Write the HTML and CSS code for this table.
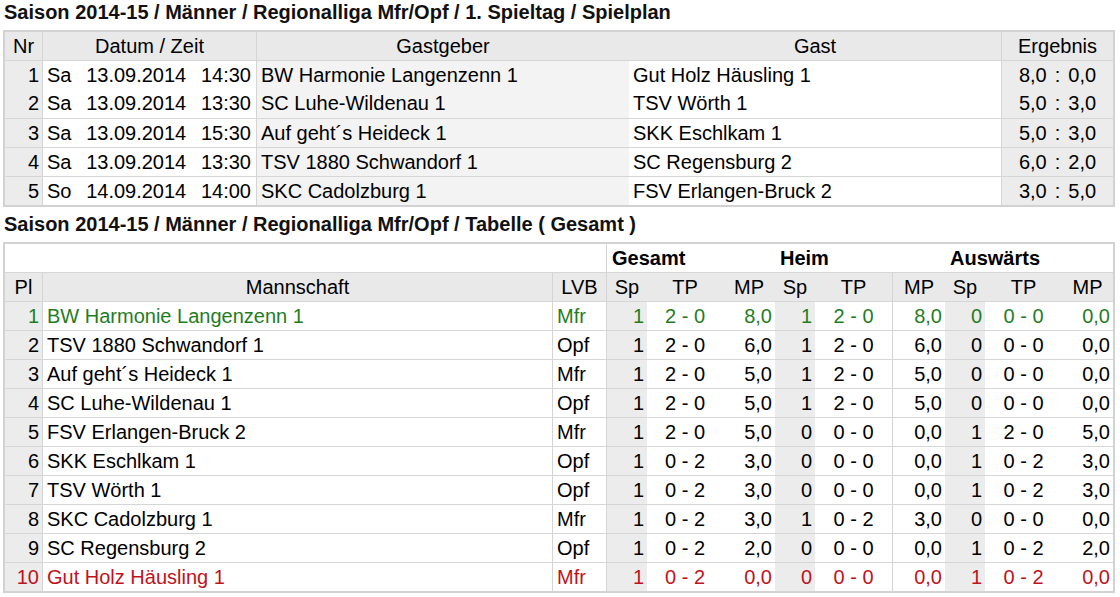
FILE: index.html
```html
<!DOCTYPE html>
<html lang="de">
<head>
<meta charset="utf-8">
<title>Regionalliga Mfr/Opf</title>
<link rel="stylesheet" href="styles.css">
</head>
<body>
<div class="page">
  <h1 class="title">Saison 2014-15 / Männer / Regionalliga Mfr/Opf / 1. Spieltag / Spielplan</h1>
  <div class="tbl plan">
    <div class="row head">
      <div class="c center vr">Nr</div>
      <div class="c center vr">Datum / Zeit</div>
      <div class="c center">Gastgeber</div>
      <div class="c center vr">Gast</div>
      <div class="c center">Ergebnis</div>
    </div>
    <div class="row">
      <div class="c right vr grey">1</div>
      <div class="c dt vr"><span>Sa</span><span>13.09.2014</span><span>14:30</span></div>
      <div class="c light">BW Harmonie Langenzenn 1</div>
      <div class="c vr">Gut Holz Häusling 1</div>
      <div class="c center grey">8,0<span class="sep">:</span>0,0</div>
    </div>
    <div class="row nosep">
      <div class="c right vr grey">2</div>
      <div class="c dt vr"><span>Sa</span><span>13.09.2014</span><span>13:30</span></div>
      <div class="c light">SC Luhe-Wildenau 1</div>
      <div class="c vr">TSV Wörth 1</div>
      <div class="c center grey">5,0<span class="sep">:</span>3,0</div>
    </div>
    <div class="row">
      <div class="c right vr grey">3</div>
      <div class="c dt vr"><span>Sa</span><span>13.09.2014</span><span>15:30</span></div>
      <div class="c light">Auf geht´s Heideck 1</div>
      <div class="c vr">SKK Eschlkam 1</div>
      <div class="c center grey">5,0<span class="sep">:</span>3,0</div>
    </div>
    <div class="row">
      <div class="c right vr grey">4</div>
      <div class="c dt vr"><span>Sa</span><span>13.09.2014</span><span>13:30</span></div>
      <div class="c light">TSV 1880 Schwandorf 1</div>
      <div class="c vr">SC Regensburg 2</div>
      <div class="c center grey">6,0<span class="sep">:</span>2,0</div>
    </div>
    <div class="row">
      <div class="c right vr grey">5</div>
      <div class="c dt vr"><span>So</span><span>14.09.2014</span><span>14:00</span></div>
      <div class="c light">SKC Cadolzburg 1</div>
      <div class="c vr">FSV Erlangen-Bruck 2</div>
      <div class="c center grey">3,0<span class="sep">:</span>5,0</div>
    </div>
  </div>

  <h1 class="title second">Saison 2014-15 / Männer / Regionalliga Mfr/Opf / Tabelle ( Gesamt )</h1>
  <div class="tbl standings">
    <div class="row group">
      <div class="c span3 vr"></div>
      <div class="c span3 bold">Gesamt</div>
      <div class="c span3 bold">Heim</div>
      <div class="c span3 bold">Auswärts</div>
    </div>
    <div class="row head">
      <div class="c center vr">Pl</div>
      <div class="c center vr">Mannschaft</div>
      <div class="c center vr">LVB</div>
      <div class="c center">Sp</div>
      <div class="c center">TP</div>
      <div class="c center">MP</div>
      <div class="c center">Sp</div>
      <div class="c center vr">TP</div>
      <div class="c center">MP</div>
      <div class="c center">Sp</div>
      <div class="c center">TP</div>
      <div class="c center">MP</div>
    </div>
    <div class="row up">
      <div class="c right vr grey">1</div><div class="c vr">BW Harmonie Langenzenn 1</div><div class="c vr">Mfr</div>
      <div class="c right grey">1</div><div class="c center">2 - 0</div><div class="c right">8,0</div>
      <div class="c right grey">1</div><div class="c center vr">2 - 0</div><div class="c right">8,0</div>
      <div class="c right grey">0</div><div class="c center">0 - 0</div><div class="c right">0,0</div>
    </div>
    <div class="row">
      <div class="c right vr grey">2</div><div class="c vr">TSV 1880 Schwandorf 1</div><div class="c vr">Opf</div>
      <div class="c right grey">1</div><div class="c center">2 - 0</div><div class="c right">6,0</div>
      <div class="c right grey">1</div><div class="c center vr">2 - 0</div><div class="c right">6,0</div>
      <div class="c right grey">0</div><div class="c center">0 - 0</div><div class="c right">0,0</div>
    </div>
    <div class="row">
      <div class="c right vr grey">3</div><div class="c vr">Auf geht´s Heideck 1</div><div class="c vr">Mfr</div>
      <div class="c right grey">1</div><div class="c center">2 - 0</div><div class="c right">5,0</div>
      <div class="c right grey">1</div><div class="c center vr">2 - 0</div><div class="c right">5,0</div>
      <div class="c right grey">0</div><div class="c center">0 - 0</div><div class="c right">0,0</div>
    </div>
    <div class="row">
      <div class="c right vr grey">4</div><div class="c vr">SC Luhe-Wildenau 1</div><div class="c vr">Opf</div>
      <div class="c right grey">1</div><div class="c center">2 - 0</div><div class="c right">5,0</div>
      <div class="c right grey">1</div><div class="c center vr">2 - 0</div><div class="c right">5,0</div>
      <div class="c right grey">0</div><div class="c center">0 - 0</div><div class="c right">0,0</div>
    </div>
    <div class="row">
      <div class="c right vr grey">5</div><div class="c vr">FSV Erlangen-Bruck 2</div><div class="c vr">Mfr</div>
      <div class="c right grey">1</div><div class="c center">2 - 0</div><div class="c right">5,0</div>
      <div class="c right grey">0</div><div class="c center vr">0 - 0</div><div class="c right">0,0</div>
      <div class="c right grey">1</div><div class="c center">2 - 0</div><div class="c right">5,0</div>
    </div>
    <div class="row">
      <div class="c right vr grey">6</div><div class="c vr">SKK Eschlkam 1</div><div class="c vr">Opf</div>
      <div class="c right grey">1</div><div class="c center">0 - 2</div><div class="c right">3,0</div>
      <div class="c right grey">0</div><div class="c center vr">0 - 0</div><div class="c right">0,0</div>
      <div class="c right grey">1</div><div class="c center">0 - 2</div><div class="c right">3,0</div>
    </div>
    <div class="row">
      <div class="c right vr grey">7</div><div class="c vr">TSV Wörth 1</div><div class="c vr">Opf</div>
      <div class="c right grey">1</div><div class="c center">0 - 2</div><div class="c right">3,0</div>
      <div class="c right grey">0</div><div class="c center vr">0 - 0</div><div class="c right">0,0</div>
      <div class="c right grey">1</div><div class="c center">0 - 2</div><div class="c right">3,0</div>
    </div>
    <div class="row">
      <div class="c right vr grey">8</div><div class="c vr">SKC Cadolzburg 1</div><div class="c vr">Mfr</div>
      <div class="c right grey">1</div><div class="c center">0 - 2</div><div class="c right">3,0</div>
      <div class="c right grey">1</div><div class="c center vr">0 - 2</div><div class="c right">3,0</div>
      <div class="c right grey">0</div><div class="c center">0 - 0</div><div class="c right">0,0</div>
    </div>
    <div class="row">
      <div class="c right vr grey">9</div><div class="c vr">SC Regensburg 2</div><div class="c vr">Opf</div>
      <div class="c right grey">1</div><div class="c center">0 - 2</div><div class="c right">2,0</div>
      <div class="c right grey">0</div><div class="c center vr">0 - 0</div><div class="c right">0,0</div>
      <div class="c right grey">1</div><div class="c center">0 - 2</div><div class="c right">2,0</div>
    </div>
    <div class="row down">
      <div class="c right vr grey">10</div><div class="c vr">Gut Holz Häusling 1</div><div class="c vr">Mfr</div>
      <div class="c right grey">1</div><div class="c center">0 - 2</div><div class="c right">0,0</div>
      <div class="c right grey">0</div><div class="c center vr">0 - 0</div><div class="c right">0,0</div>
      <div class="c right grey">1</div><div class="c center">0 - 2</div><div class="c right">0,0</div>
    </div>
  </div>
</div>
</body>
</html>
```

FILE: styles.css
```css
html, body {
  margin: 0;
  padding: 0;
  background: #ffffff;
}

body {
  font-family: "Liberation Sans", Arial, sans-serif;
  font-size: 20px;
  color: #000;
}

.page {
  padding: 0 5px 0 3px;
  width: 1112px;
}

.title {
  margin: 0 0 6px 0;
  padding-left: 1px;
  font-size: 20px;
  line-height: 24px;
  font-weight: bold;
  color: #111;
}

.title.second {
  margin-top: 5px;
}

.tbl {
  border: 2px solid #d2d2d2;
  background: #fff;
}

.row {
  display: grid;
  border-top: 1px solid #d6d6d6;
  height: 28px;
}

.row.nosep {
  border-top: none;
  height: 29px;
}

.row.head {
  background: #e9e9e9;
}

.plan .row.head {
  border-top: none;
}

.plan .row {
  grid-template-columns: 38px 214px 372px 373px 111px;
}

.standings .row {
  grid-template-columns: 38px 510px 54px 40px 76px 52px 40px 78px 52px 40px 77px 51px;
}

.standings .row.group {
  border-top: none;
  grid-template-columns: 602px 168px 170px 168px;
}

.c {
  box-sizing: border-box;
  padding: 0 4px;
  line-height: 28px;
  white-space: nowrap;
  overflow: hidden;
}

.nosep .c {
  line-height: 29px;
}

.vr {
  border-right: 1px solid #d4d4d4;
}

.center { text-align: center; }
.right { text-align: right; padding-right: 3px; }
.bold { font-weight: bold; padding-left: 5px; }

.grey { background: #ececec; }
.light { background: #f3f3f3; }

.sep {
  margin: 0 8px;
}

.dt {
  display: flex;
  justify-content: space-between;
  padding: 0 5px 0 4px;
}

.up { color: #1f7d1f; }
.down { color: #c0121c; }
```
